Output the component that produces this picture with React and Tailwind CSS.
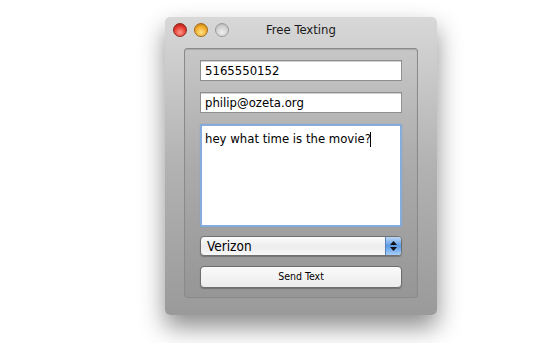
import React from 'react';

export default function App() {
    return (
        <div className="w-[550px] h-[343px] bg-white overflow-hidden pt-[17px] pl-[165px]" style={{ fontFamily: '"DejaVu Sans Condensed", "DejaVu Sans", "Noto Sans", sans-serif' }}>
            {/* Window */}
            <div className="w-[272px] h-[298px] rounded-[5px] bg-gradient-to-b from-[#d8d8d8] via-[#b2b2b2] to-[#9a9a9a] shadow-[0_12px_24px_rgba(0,0,0,0.45)] flex flex-col">
                {/* Title bar */}
                <div className="h-[25px] flex items-center px-[8px] relative">
                    <div className="flex gap-[7px] items-center">
                        <span className="w-[14px] h-[14px] rounded-full bg-[radial-gradient(circle_at_50%_70%,#ff9a8a,#e0322a_60%,#9a1a14)] border border-[#8a2a22]" />
                        <span className="w-[14px] h-[14px] rounded-full bg-[radial-gradient(circle_at_50%_70%,#ffe38a,#f0a826_60%,#a86a10)] border border-[#a06a18]" />
                        <span className="w-[14px] h-[14px] rounded-full bg-[radial-gradient(circle_at_50%_70%,#eeeeee,#cfcfcf_60%,#a8a8a8)] border border-[#9a9a9a]" />
                    </div>
                    <div className="absolute inset-0 flex items-center justify-center text-[13px] text-[#1a1a1a]">Free Texting</div>
                </div>
                {/* Group box */}
                <div className="mt-[6px] mx-[19px] h-[250px] rounded-[3px] border border-[#8a8a8a] bg-black/[0.04] shadow-[inset_0_1px_1px_rgba(0,0,0,0.15)] flex flex-col px-[15px] pt-[11px]">
                    <div className="h-[21px] bg-white border border-[#8f8f8f] shadow-[inset_0_1px_0_#cfcfcf] flex items-center px-[4px] text-[13px] text-black">5165550152</div>
                    <div className="mt-[11px] h-[21px] bg-white border border-[#8f8f8f] shadow-[inset_0_1px_0_#cfcfcf] flex items-center px-[4px] text-[13px] text-black">philip@ozeta.org</div>
                    <div className="mt-[11px] h-[103px] bg-white border-[2px] border-[#86acdc] rounded-[2px] shadow-[0_0_1px_#5d8fd0] px-[3px] pt-[3px] text-[13px] text-black">
                        hey what time is the movie?<span className="inline-block w-[1px] h-[15px] bg-black align-middle -ml-[1px]" />
                    </div>
                    <div className="mt-[9px] h-[20px] rounded-[4px] border border-[#707070] bg-gradient-to-b from-[#fdfdfd] via-[#ececec] to-[#f8f8f8] shadow-[0_1px_1px_rgba(0,0,0,0.25)] flex items-center overflow-hidden">
                        <span className="flex-1 pl-[6px] text-[13.5px] text-black">Verizon</span>
                        <span className="w-[16px] h-full bg-gradient-to-b from-[#bcd7f5] via-[#5a9ae6] to-[#a8cdf7] border-l border-[#5b7fb8] flex flex-col items-center justify-center gap-[2px]">
                            <svg width="7" height="4" viewBox="0 0 7 4"><path d="M3.5 0 L7 4 L0 4 Z" fill="#111" /></svg>
                            <svg width="7" height="4" viewBox="0 0 7 4"><path d="M0 0 L7 0 L3.5 4 Z" fill="#111" /></svg>
                        </span>
                    </div>
                    <div className="mt-[10px] h-[22px] rounded-[4px] border border-[#6e6e6e] bg-gradient-to-b from-[#fafafa] to-[#ececec] shadow-[0_1px_1px_rgba(0,0,0,0.25)] flex items-center justify-center text-[10.5px] text-black">
                        Send Text
                    </div>
                </div>
            </div>
        </div>
    );
}
